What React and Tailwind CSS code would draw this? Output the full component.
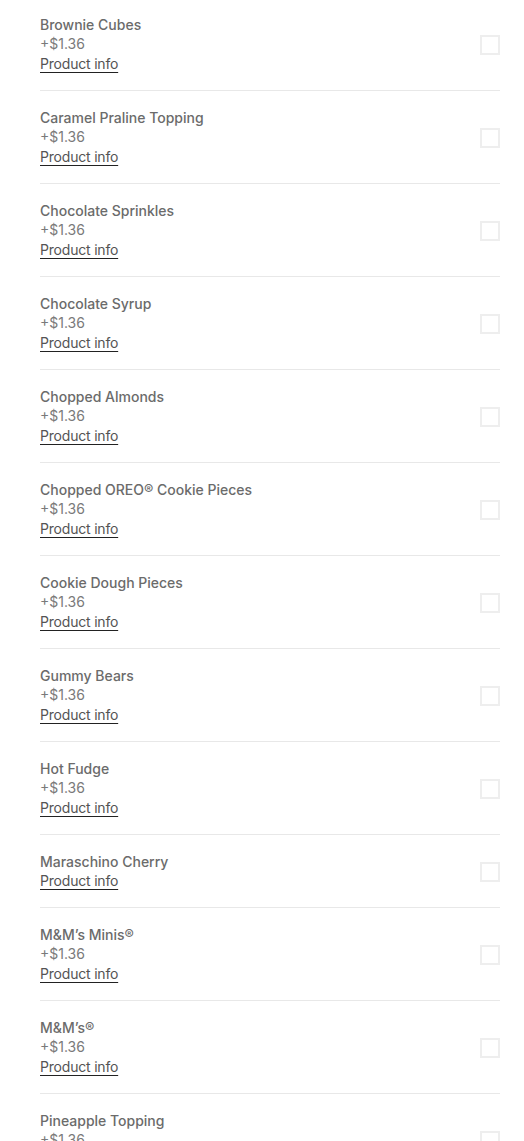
const ITEMS = [
  { name: 'Brownie Cubes', price: '+$1.36' },
  { name: 'Caramel Praline Topping', price: '+$1.36' },
  { name: 'Chocolate Sprinkles', price: '+$1.36' },
  { name: 'Chocolate Syrup', price: '+$1.36' },
  { name: 'Chopped Almonds', price: '+$1.36' },
  { name: 'Chopped OREO® Cookie Pieces', price: '+$1.36' },
  { name: 'Cookie Dough Pieces', price: '+$1.36' },
  { name: 'Gummy Bears', price: '+$1.36' },
  { name: 'Hot Fudge', price: '+$1.36' },
  { name: 'Maraschino Cherry' },
  { name: 'M&M’s Minis®', price: '+$1.36' },
  { name: 'M&M’s®', price: '+$1.36' },
  { name: 'Pineapple Topping', price: '+$1.36' },
]

function Row({ item }) {
  return (
    <label className="flex items-center justify-between border-t border-[#e8e8e8] pt-[17px] pb-[16px]">
      <div className="flex flex-col">
        <span className="text-[14px] leading-[19px] font-medium text-[#6b6b6b]">{item.name}</span>
        {item.price && (
          <span className="text-[14px] leading-[20px] text-[#7a7a7a]">{item.price}</span>
        )}
        <span className="text-[14px] leading-[20px] tracking-[-0.2px] text-[#545454] underline underline-offset-[3px] decoration-[#222]">
          Product info
        </span>
      </div>
      <span className="size-[20px] border-2 border-[#eeeeee]" />
    </label>
  )
}

export default function App() {
  return (
    <div className="h-[1141px] overflow-hidden bg-white font-['Inter',sans-serif]">
      <div className="ml-[40px] mr-[24px] -mt-[3px]">
        {ITEMS.map((item) => (
          <Row key={item.name} item={item} />
        ))}
      </div>
    </div>
  )
}
